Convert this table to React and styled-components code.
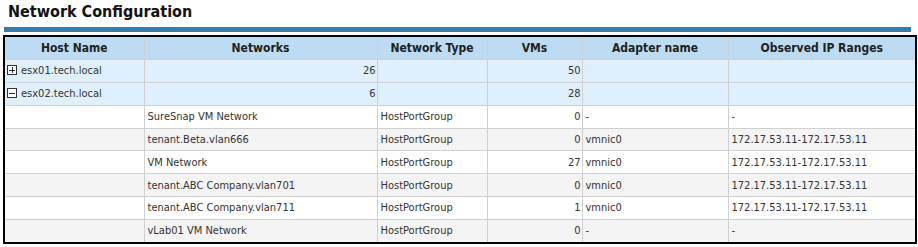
import React from 'react';
import styled, { createGlobalStyle } from 'styled-components';

const GlobalStyle = createGlobalStyle`
  body {
    margin: 0;
    background: #ffffff;
    font-family: "DejaVu Sans Condensed", "Liberation Sans", sans-serif;
  }
`;

const columns = [
  { key: 'host', title: 'Host Name', width: 140 },
  { key: 'network', title: 'Networks', width: 233 },
  { key: 'type', title: 'Network Type', width: 110 },
  { key: 'vms', title: 'VMs', width: 95 },
  { key: 'adapter', title: 'Adapter name', width: 146 },
  { key: 'ip', title: 'Observed IP Ranges', width: 188 }
];

const hosts = [
  { name: 'esx01.tech.local', networks: 26, vms: 50, expanded: false, children: [] },
  {
    name: 'esx02.tech.local',
    networks: 6,
    vms: 28,
    expanded: true,
    children: [
      { network: 'SureSnap VM Network', type: 'HostPortGroup', vms: 0, adapter: '-', ip: '-' },
      { network: 'tenant.Beta.vlan666', type: 'HostPortGroup', vms: 0, adapter: 'vmnic0', ip: '172.17.53.11-172.17.53.11' },
      { network: 'VM Network', type: 'HostPortGroup', vms: 27, adapter: 'vmnic0', ip: '172.17.53.11-172.17.53.11' },
      { network: 'tenant.ABC Company.vlan701', type: 'HostPortGroup', vms: 0, adapter: 'vmnic0', ip: '172.17.53.11-172.17.53.11' },
      { network: 'tenant.ABC Company.vlan711', type: 'HostPortGroup', vms: 1, adapter: 'vmnic0', ip: '172.17.53.11-172.17.53.11' },
      { network: 'vLab01 VM Network', type: 'HostPortGroup', vms: 0, adapter: '-', ip: '-' }
    ]
  }
];

export default function App() {
  return (
    <Page>
      <GlobalStyle />
      <Title>Network Configuration</Title>
      <TitleBar />
      <Grid>
        <colgroup>
          {columns.map((c) => (
            <col key={c.key} style={{ width: c.width }} />
          ))}
        </colgroup>
        <thead>
          <tr>
            {columns.map((c) => (
              <HeadCell key={c.key}>{c.title}</HeadCell>
            ))}
          </tr>
        </thead>
        <tbody>
          {hosts.map((h) => (
            <React.Fragment key={h.name}>
              <Row $kind="host">
                <Cell>
                  <HostLabel>
                    <Toggle $open={h.expanded} />
                    {h.name}
                  </HostLabel>
                </Cell>
                <Cell $numeric>{h.networks}</Cell>
                <Cell />
                <Cell $numeric>{h.vms}</Cell>
                <Cell />
                <Cell />
              </Row>
              {h.children.map((n, i) => (
                <Row key={n.network} $kind={i % 2 ? 'odd' : 'even'}>
                  <Cell />
                  <Cell>{n.network}</Cell>
                  <Cell>{n.type}</Cell>
                  <Cell $numeric>{n.vms}</Cell>
                  <Cell>{n.adapter}</Cell>
                  <Cell>{n.ip}</Cell>
                </Row>
              ))}
            </React.Fragment>
          ))}
        </tbody>
      </Grid>
    </Page>
  );
}

const Page = styled.div`
  padding: 0 3px;
`;

const Title = styled.h2`
  margin: 0;
  padding: 2px 0 0 5px;
  height: 24px;
  box-sizing: border-box;
  font-size: 16px;
  font-weight: bold;
  color: #111111;
  font-family: "DejaVu Sans Condensed", "Liberation Sans", sans-serif;
`;

const TitleBar = styled.div`
  margin: 3px 4px 3px 1px;
  height: 5px;
  background: #3a7ca8;
`;

const Grid = styled.table`
  width: 912px;
  table-layout: fixed;
  border-collapse: collapse;
  border: 2px solid #000000;
  font-size: 11px;
  color: #333333;
`;

const HeadCell = styled.th`
  height: 22px;
  padding: 0 3px;
  background: #bddcf4;
  border-left: 1px solid #d0d0d0;
  border-bottom: 1px solid #d0d0d0;
  font-size: 12px;
  font-weight: bold;
  color: #222222;
  text-align: center;
  white-space: nowrap;
`;

const rowColors = {
  host: '#dff0fc',
  even: '#ffffff',
  odd: '#f4f4f4'
};

const Row = styled.tr`
  background: ${(p) => rowColors[p.$kind]};
`;

const Cell = styled.td`
  height: 21.85px;
  padding: 0 ${(p) => (p.$numeric ? '1px' : '3px')} 0 3px;
  border: 1px solid #d0d0d0;
  text-align: ${(p) => (p.$numeric ? 'right' : 'left')};
  white-space: nowrap;
  overflow: hidden;
`;

const HostLabel = styled.span`
  display: inline-flex;
  align-items: center;
  gap: 4px;
  margin-left: -1px;
`;

const Toggle = styled.span`
  position: relative;
  display: inline-block;
  width: 8px;
  height: 8px;
  border: 1px solid #333333;
  background: #ffffff;

  &::before,
  &::after {
    content: '';
    position: absolute;
    background: #333333;
  }

  &::before {
    left: 1px;
    right: 1px;
    top: 3.5px;
    height: 1px;
  }

  &::after {
    display: ${(p) => (p.$open ? 'none' : 'block')};
    top: 1px;
    bottom: 1px;
    left: 3.5px;
    width: 1px;
  }
`;
